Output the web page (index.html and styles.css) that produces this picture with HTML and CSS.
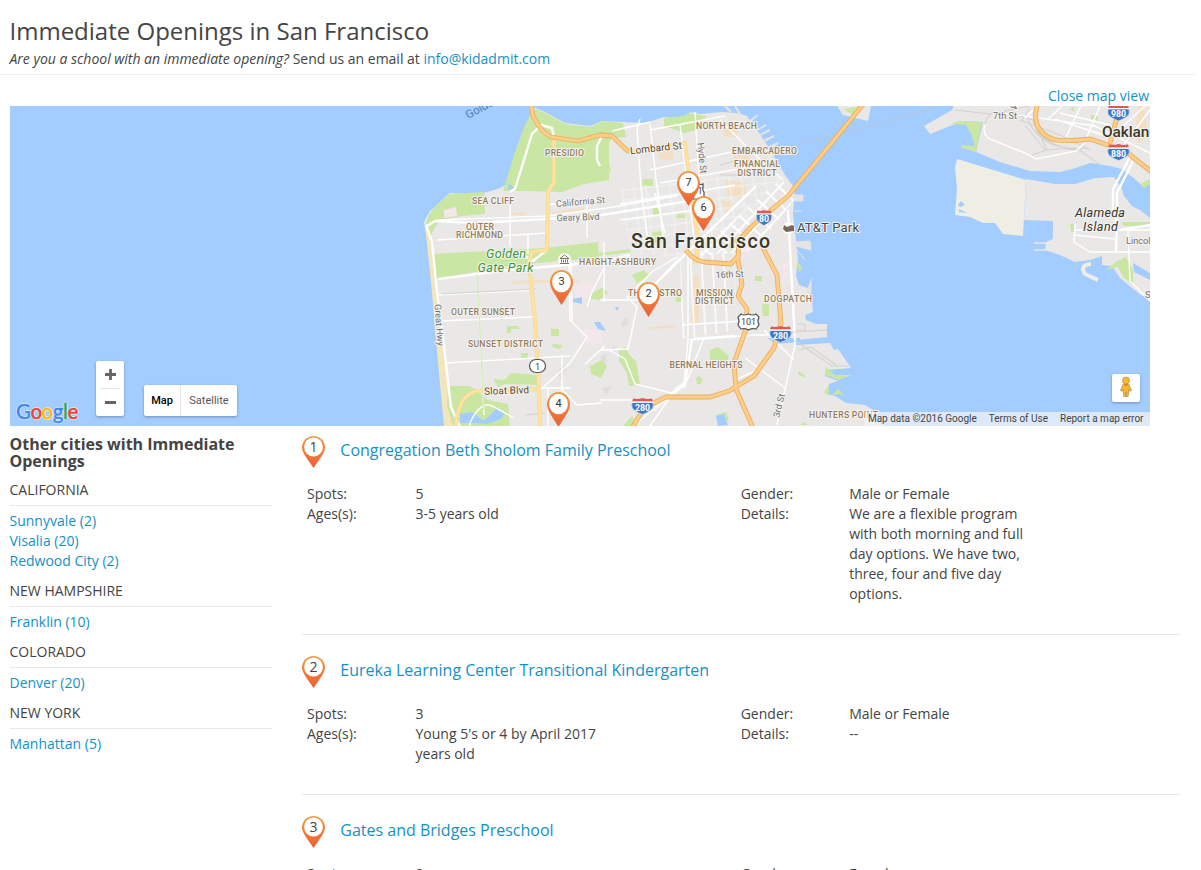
FILE: index.html
```html
<!DOCTYPE html>
<html lang="en">
<head>
<meta charset="utf-8">
<title>Immediate Openings in San Francisco</title>
<link rel="stylesheet" href="styles.css">
</head>
<body>
<svg class="defs" aria-hidden="true">
  <defs>
    <linearGradient id="pinFill" x1="0" y1="0" x2="0" y2="1"><stop offset="0" stop-color="#f29a45"/><stop offset="1" stop-color="#ed5f35"/></linearGradient>
    <symbol id="pin" viewBox="0 0 23 32" preserveAspectRatio="none"><path d="M11.5 0C5.2 0 0 5 0 11.3c0 3.100 1.300 5.600 3 8.400L11.500 32 20 19.700c1.700-2.800 3-5.300 3-8.400C23 5 17.800 0 11.500 0z" fill="url(#pinFill)"/><circle cx="11.500" cy="11" r="9.400" fill="#fff"/></symbol>
    <symbol id="shield" viewBox="0 0 24 17" preserveAspectRatio="none"><path d="M1.500 4.500h21q1.500 5-2.500 8-4 2.500-8 4-4-1.500-8-4-4-3-2.500-8z" fill="#3b78c8" stroke="#e8f1fb" stroke-width=".6"/><path d="M2.500 .600q5 1.200 9.500-.500q4.500 1.700 9.500 .500l.800 3H1.700z" fill="#d85b5b"/><path d="M1 4.100h22" stroke="#fff" stroke-width="1"/></symbol>
  </defs>
</svg>
<header class="header">
  <h1 class="title">Immediate Openings in San Francisco</h1>
  <p class="subtitle"><em>Are you a school with an immediate opening?</em> Send us an email at <a href="#">info@kidadmit.com</a></p>
</header>
<div class="map-toggle"><a href="#">Close map view</a></div>
<section class="map">
<svg class="map-canvas" width="1140" height="320" viewBox="10 106 1140 320">
  <defs>
    <pattern id="soma" width="10" height="12" patternUnits="userSpaceOnUse" patternTransform="rotate(43 700 250)"><path d="M0 6H10M5 0V12" stroke="#fff" stroke-width="1.800" fill="none"/></pattern>
    <pattern id="north" width="12" height="10" patternUnits="userSpaceOnUse" patternTransform="rotate(-7)"><path d="M0 5H12M6 0V10" stroke="#f5f5f4" stroke-width=".9" fill="none"/></pattern>
    <pattern id="mission" width="11" height="34" patternUnits="userSpaceOnUse" patternTransform="rotate(-3)"><path d="M5 0V34" stroke="#fff" stroke-width="1.500" fill="none"/></pattern>
  </defs>
  <rect x="10" y="106" width="1140" height="320" fill="#a3ccff"/>
  <!-- San Francisco peninsula -->
  <path fill="#e9e8e7" d="M531 106L545 112 565 123 590 126 603 121 622 122 645 123 664 117 685 119 690 112 700 114 722 112 737 113 747 116 757 130 767 145 776 160 785 175 795 189 793 215 795 230 798 260 796 275 799 285 808 288 812 300 813 312 805 315 806 320 816 324 827 324 827 337 797 340 796 345 830 343 834 350 838 349 851 368 826 370 825 376 838 381 829 384 826 394 835 396 846 403 865 405 876 412 870 418 885 426 445 426 440 370 435 330 432 285 430 262 427 240 424 222 430 211 440 202 450 193 480 194 498 189 508 184 514 172 520 155 526 135 530 122z"/>
  <g fill="#e5e4e2" stroke="#e5e4e2"><path d="M794 195h9v6h-10zM795 242l15-1 1 9-15-4zM797 250l8 10M794 211h8M795 186l5-2M811 279v14h-5"/><path d="M731 112l-6-6M740 114l-5-8M757 130l9-5M760 135l10-5M764 141l10-5M768 148l10-5M772 155l10-4M750 121l8-6" stroke-width="2"/></g>
  <path fill="#f4e6bb" d="M530 122l4 6-9 34-11 21-7 2 7-17zM425 225l7 17 5 45 7 65 8 74h-8l-7-74-5-60z"/>
  <g fill="#c9e6a2">
    <path d="M533 108l12 5 20 11 25 3 12-5 8 1-1 17 0 40-25 4-22 8-36-1-23 0 11-36 9-25z"/>
    <path d="M600 140l9-2v40l-9 3z"/>
    <path d="M426 222q5-15 24-28l34-2 1 22-24 2-20 4-6 7-5 10z"/>
    <path d="M600 121l23 2 3 14-15 1-5 13 5 20-11 3zM664 118l20-2 5-3 17 3-4 12-17 5-21-7z"/>
    <path d="M433 254l37-2 75-4 53-6 1 16-40 3-50 5-74 13z"/>
    <path d="M599 253l32-4v3l-32 4zM643 179h10v7h-11zM677 213h9v5h-9zM651 233l10-2 5 9-14 4zM653 208h7v7h-7zM730 238l12 2-4 14-9-6z"/>
    <path d="M493 379l11 1 8-7 26 2v10l-33-1-7 3zM507 326h12v3h-8v4h-4zM521 353h7v6h-7zM551 329h8v7h-8zM553 344l9 1-2 4-8-2zM448 386l22 0 18 14 20 4 2 22h-57l-6-20z"/>
    <path d="M591 294l12-7 5 6-8 7-9-1zM590 366l12-6 5 6-6 12-10-4zM619 350l6-3 5 9 6 5 4 24-11 1-2-13-8-12zM632 275l12-5 6 6-13 7zM677 293h5v9h-6zM710 350l8-3 11 9-2 5h-17zM696 378l3-2 4 4-2 4h-4zM762 304h7v12h-6zM716 415l10-3 3 7-7 7zM755 276h7v5h-7zM798 371l7 4v3l-7-4zM797 260l5 8-3 5zM826 367l9 8 17 0-13 5-14-5zM824 392l5-6v9zM832 395l6-6 8 8-6-3zM803 422l6 3h-8zM623 426l9-10 3 5-4 5z"/>
  </g>
  <path fill="#f4e6ea" d="M444 210l12-3 1 9-13 2zM576 285l17-4 1 8-11 12-8-5zM584 328l17 3 1 12-14 1-8-7zM740 243l11 2-2 10-8-3zM783 262l5 0v16h-6zM600 241l6 2-5 6z"/>
  <path fill="#f3dfc5" d="M512 213l13-1v3h-14zM552 212l32-4v3l-32 5zM657 153l16-3v10l-14-1zM725 180l22 3-3 16-17-3zM733 155l14-3 5 12-14 3zM723 129l14 0v8h-13zM511 281l67-2v3l-67 2zM650 327l26-2v3l-26 1zM693 275h6v50l-8-3zM720 200l15 3-8 10z"/>
  <path fill="#a3ccff" d="M460 414l12-2 12 9 12-12 9 4-4 6-14 5-12-1-15 0zM508 183l6 5-5 2zM573 299l9-2v7l-9-2zM594 322l6 0 6 9-8-2zM716 416l8-2 4 11-10 1zM615 307l4 0-2 4zM768 338l32 0v4l-25 2z"/>
  <path fill="#dadad8" d="M621 323l5-7 3 7-6 5zM611 349l4-5-1 7zM600 356l7-3-2 12zM602 388l10-2-6 9zM583 340l4-5-2 9zM557 373l7-9 3 3-6 12z" opacity=".7"/>
  <!-- Dense street grids -->
  <path fill="url(#north)" d="M620 188L690 178 786 176 702 262 630 252z"/>
  <path fill="url(#soma)" d="M700 249L782 178 794 200 754 250 702 256z"/>
  <path fill="url(#mission)" d="M680 252h54l3 78-55 9z"/>
  <g class="minor">
    <path d="M437 220l110-4 60-8 70-12M437 240l110-7M510 196v50M546 205l54-6M587 198v40M528 254v-20"/>
    <path d="M640 119l-3 9 4 60 8 62M650 124l6 55 8 65M680 125l14 112M695 112l5 85M612 131l38-9M650 130l75-14M650 170l90-20M660 183l90-16M620 204l115-19M620 220l90-12M720 120l30 30 33 30M655 193l10 40"/>
    <path d="M437 295l98-5M440 321l93-4M445 363l90-5 35-2M477 275l7 140M470 426v-3q10-22 22-17l22 12M600 300h40M571 262l1 60 15 15-17 26-30 27M604 242v60M604 268l-12 24-5 15"/>
    <path d="M548 388v38M562 355v35l15 15 25-2M541 388h30M600 350l28-1 9-42-10-10 25-25 25-15M605 346l-20 18M607 349l18 10 10 25 40 10M600 400l35 0M570 322l-1-60"/>
    <path d="M688 252v90l-4 40-50 44M682 325l60-4M690 340l65-5h27M704 338l-20 50M678 386l-28 40M745 358l40 30M790 260l5 85-18 80M735 380l22-10M764 330l30 30"/>
  </g>
  <g class="major"><path d="M427 226l8-5 40 2 72-4 55-4 50-8 48-8M426 225l6 17 5 50 7 55 7 60 9 20M438 279l72-9 90-8 30-7M680 258l-33 35M548 249l-15 12-15-9-30 5M510 192l5-3 17-55 9-9 11 3 2 10M602 136l-5 10 0 14 3 6M788 210l7 130M647 292l53-52 56-54M693 339l42-3M692 339l-7 45-33 27"/></g>
  <path class="thin-green" d="M477 274l7 136"/>
  <g class="local-gray"><path d="M441 294l95-5M797 342l35 24 18 0M799 350l12-3 25 18M797 324h8v6h-9M782 334l12-2 33-2M525 415l20-2M720 165l14-4M720 175l30 0"/></g>
  <g class="yellow-case"><path d="M554 140v42l-6 10-1 58-15 2-3 10 6 60 3 50 2 54M628 152l57-9 5 45 8 48M456 426q2-30 20-35l64-2M700 236l-5 28"/></g>
  <g class="yellow"><path d="M554 140v42l-6 10-1 58-15 2-3 10 6 60 3 50 2 54M628 152l57-9 5 45 8 48M456 426q2-30 20-35l64-2M700 236l-5 28"/></g>
  <!-- Yerba Buena island and the east bay -->
  <path d="M837 106l6 9 25 6 3-15z" fill="#e9e8e7"/><path d="M843 109l10 6 10-9" fill="#c9e6a2"/>
  <path d="M780 160q10-15 30-19l65-16 60-18" fill="none" stroke="#b6c6d9"/>
  <path fill="#e9e8e7" d="M924 126L952 110 954 106H1150V184L1143 187 1136 180 1122 169 1110 166 1090 163 1076 168 1060 172 1030 171 1000 162 976 152 983 122 965 121 950 126 930 134z"/>
  <path fill="#c9e6a2" d="M982 122l-6 30-15-4 0-3 14 1-4-12-5-9-16-1 8-3zM1091 115l7 1 0 5-7-2zM1070 109l4-3v6zM1050 134l6 4-2 3z"/>
  <path fill="#f3dfc5" d="M1138 106l6 0 4 26-8 12-6-8z"/>
  <path fill="#efeee5" d="M957 159L1026 180 1023 236 1003 234 995 223 983 223 970 217 955 215 957 188 955 168z"/>
  <path fill="#e9e8e7" d="M1026 179L1055 184 1075 184 1095 178 1114 177 1121 187 1130 203 1140 207 1150 214V300L1141 295 1132 288 1120 278 1112 266 1102 265 1102 256 1090 260 1075 262 1060 255 1045 250 1046 242 1053 239 1053 221 1024 220z"/>
  <path d="M1117 172l16 12 11 4 6-6v36l-10-8-8-4-8-10z" fill="#a3ccff"/><path d="M1034 243h12M1034 250h12" fill="none" stroke="#e9e8e7" stroke-width="1.500"/>
  <path d="M1091 264q-12 1-6 10l13 6" fill="none" stroke="#eeede6" stroke-width="4"/>
  <path d="M958 205l3-4 4 4-5 2zM959 209l8 4-8-1z" fill="#a3ccff"/>
  <path fill="#c9e6a2" d="M1122 222h28v4h-26zM1070 224h4v8h-3zM1106 270l11-9 9-4 7 13 0 15-10-8-5-10zM1140 184l10-5v5l-6 4z"/>
  <path d="M1133 263l17 10v7l-16-8z" fill="#a3ccff"/>
  <g class="local-gray"><path d="M955 110l35 4 40-8M985 124q2-15 24-11l24 7 14 30-15 5M1020 120l40 15 30 15M1025 125l20 25 30-2M1030 108l-8 12M1035 130q20 20 45 20l20 15M1027 118q15 35 60 30"/></g>
  <g class="minor"><path d="M985 125q-4 12 10 16l30 12 11 6 40-8 15-14M1005 113l90 13 55 27M1047 120l15-14M1066 137l15-31M1085 141l15-35M1105 143l40-37M1120 150l30-40M1060 113l50 12M1055 119l60 20M1075 230h75M1075 224l-1 18 16 10h60M1075 235l40 4M1128 231l2 50 20 20"/></g>
  <g class="major"><path d="M1130 157l-17 32v20l4 15-1 28M1133 161l-16 32v35M1120 230l30-5M1033 110l-8 8"/></g>
  <!-- Freeways -->
  <g class="freeway-case"><path d="M531 103l2 13q7 15 18 21l27 4 22-6 12 1 17 16M866 101L788 196l-36 30-13 14-1 20 4 24-4 12 9 13-1 20-12 34 2 26 18 41M686 250q7 10 18 12l27 2 7-8M763 248l14 27 4 48-7 25-20 28-25 15-19 6-44 0-22 11-13 22M1038 103q-8 23 10 34 8 6 42 2l15 5 20 7 28 22M1110 143l6-22 10-18"/></g>
  <g class="freeway"><path d="M531 103l2 13q7 15 18 21l27 4 22-6 12 1 17 16M866 101L788 196l-36 30-13 14-1 20 4 24-4 12 9 13-1 20-12 34 2 26 18 41M686 250q7 10 18 12l27 2 7-8M763 248l14 27 4 48-7 25-20 28-25 15-19 6-44 0-22 11-13 22M1038 103q-8 23 10 34 8 6 42 2l15 5 20 7 28 22M1110 143l6-22 10-18"/></g>
  <!-- Labels -->
  <g class="area">
    <text x="564.500" y="155.500" textLength="39">PRESIDIO</text><text x="493" y="203.500" textLength="42">SEA CLIFF</text>
    <text x="480" y="229.500" textLength="28">OUTER</text><text x="479.500" y="238" textLength="47">RICHMOND</text>
    <text x="726.500" y="129" textLength="61">NORTH BEACH</text><text x="764.500" y="154" textLength="65">EMBARCADERO</text>
    <text x="757" y="167" textLength="46">FINANCIAL</text><text x="757" y="176" textLength="39">DISTRICT</text>
    <text x="617.500" y="265" textLength="77">HAIGHT-ASHBURY</text><text x="655" y="295.500" textLength="54">THE CASTRO</text>
    <text x="714.500" y="295.500" textLength="37">MISSION</text><text x="714.500" y="304" textLength="39">DISTRICT</text>
    <text x="788" y="302" textLength="48">DOGPATCH</text><text x="483" y="315" textLength="64">OUTER SUNSET</text>
    <text x="505.500" y="347" textLength="75">SUNSET DISTRICT</text><text x="706" y="368" textLength="73">BERNAL HEIGHTS</text>
    <text x="843.500" y="418" textLength="69">HUNTERS POINT</text>
  </g>
  <g class="road">
    <text x="580.500" y="205" textLength="49" transform="rotate(-5 580 202)">California St</text><text x="578" y="220.500" textLength="43" transform="rotate(-2 578 217)">Geary Blvd</text>
    <text x="656" y="151.500" textLength="52" class="road-strong" transform="rotate(-6 656 148)">Lombard St</text>
    <text x="702" y="161" textLength="31" transform="rotate(84 702 158)">Hyde St</text><text x="729.500" y="277.500" textLength="28" transform="rotate(-3 729 274)">16th St</text>
    <text x="439" y="328" textLength="42" transform="rotate(86 439 325)">Great Hwy</text><text x="506.500" y="394" textLength="45" class="road-strong" transform="rotate(-2 506 390)">Sloat Blvd</text>
    <text x="779.500" y="409" textLength="24" transform="rotate(-76 779 406)">3rd St</text><text x="1005" y="119" textLength="24">7th St</text>
    <text x="1126" y="243.500" class="start">Lincoln Ave</text><text x="1145" y="298" class="start">Sh</text><text x="1016" y="108" transform="rotate(-60 1016 106)">W</text>
  </g>
  <text x="468" y="119" class="water" transform="rotate(-28 468 119)">Golden Gate</text>
  <g class="park"><text x="506" y="258" textLength="40">Golden</text><text x="505.500" y="271.500" textLength="56">Gate Park</text></g>
  <g class="island"><text x="1100" y="217" textLength="50">Alameda</text><text x="1100.500" y="230.500" textLength="35">Island</text></g>
  <text x="1102" y="137" class="city-small" textLength="56">Oakland</text>
  <text x="631" y="247.500" class="city" textLength="139">San Francisco</text>
  <circle cx="788.500" cy="228" r="6" fill="#fff"/><path d="M784 225l3 2 5-2 2 1v5l-8 1-3-3z" fill="#7c6657"/><text x="797" y="231.500" class="poi" textLength="62">AT&amp;T Park</text>
  <g><circle cx="564.500" cy="259.500" r="6.500" fill="#fff"/><path d="M560 258.500l4.500-3.500 4.500 3.500zM561.500 259.500v3M563.500 259.500v3M565.500 259.500v3M567.500 259.500v3M560 263.500h9" stroke="#73644f" stroke-width=".9" fill="none"/></g>
  <!-- Route markers -->
  <g class="interstate">
    <use href="#shield" x="755.500" y="210" width="17" height="16"/><text x="764" y="222.300">80</text>
    <use href="#shield" x="768.500" y="326" width="24" height="17"/><text x="780.500" y="338.500">280</text>
    <use href="#shield" x="630.500" y="398" width="24" height="17"/><text x="642.500" y="410.500">280</text>
    <use href="#shield" x="1106.500" y="104.500" width="24" height="17"/><text x="1118.500" y="117">980</text>
    <use href="#shield" x="1106.500" y="144" width="24" height="17"/><text x="1118.500" y="156.500">880</text>
  </g>
  <g class="route"><rect x="529.500" y="359.500" width="16" height="13" rx="6.500"/><text x="537.500" y="369.500">1</text><path d="M741 314q3 2 7.500 0q5 2 7.500 0l3 3q-2 4 0 8l-3 4q-4-1-7.500 1-4-2-7.500-1l-3-4q2-4 0-8z"/><text x="748.500" y="325">101</text><path d="M697 184q4 1 6 0v3q-1 3 1 5l0 4-3 3h-8v-15z"/><text x="700" y="194">1</text></g>
  <!-- School pins -->
  <g class="pin-number">
    <use href="#pin" x="677" y="171" width="23" height="35"/><text x="688.500" y="186">7</text>
    <use href="#pin" x="692" y="196" width="23" height="35"/><text x="703.500" y="211">6</text>
    <use href="#pin" x="550" y="270" width="23" height="35"/><text x="561.500" y="285">3</text>
    <use href="#pin" x="637" y="282" width="23" height="35"/><text x="648.500" y="297">2</text>
    <use href="#pin" x="547" y="392" width="23" height="35"/><text x="558.500" y="407">4</text>
  </g>
</svg>
<div class="google"><span class="g-blue">G</span><span class="g-red">o</span><span class="g-yellow">o</span><span class="g-blue">g</span><span class="g-green">l</span><span class="g-red">e</span></div>
<div class="zoom-control"><svg width="28" height="55" viewBox="0 0 28 55"><path d="M9 13.500h11M14.500 8v11M9 41.500h11" stroke="#666" stroke-width="2.800" fill="none"/><path d="M4 27.500h20" stroke="#e6e6e6"/></svg></div>
<div class="type-control"><span class="type-active">Map</span><span class="type-option">Satellite</span></div>
<div class="street-view"><svg width="12" height="22" viewBox="0 0 12 22"><g fill="#fbb829" stroke="#a88d55" stroke-width=".7"><path d="M3 8.500h6l2.500 6-1.800.8-1-2.300-.5 7.500H6.300V16h-.6v4.500H3.800L3.300 13l-1 2.300-1.800-.8z"/><circle cx="6" cy="4.500" r="3.500"/></g><path d="M4 8.500h4L6 10.500z" fill="#e7711b"/></svg></div>
<div class="map-legal"><span>Map data ©2016 Google</span><span>Terms of Use</span><span>Report a map error</span></div>
</section>
<div class="columns">
  <aside class="sidebar">
    <h2 class="side-title">Other cities with Immediate Openings</h2>
    <h3 class="state">CALIFORNIA</h3><ul class="cities"><li><a href="#">Sunnyvale (2)</a></li><li><a href="#">Visalia (20)</a></li><li><a href="#">Redwood City (2)</a></li></ul>
    <h3 class="state">NEW HAMPSHIRE</h3><ul class="cities"><li><a href="#">Franklin (10)</a></li></ul>
    <h3 class="state">COLORADO</h3><ul class="cities"><li><a href="#">Denver (20)</a></li></ul>
    <h3 class="state">NEW YORK</h3><ul class="cities"><li><a href="#">Manhattan (5)</a></li></ul>
  </aside>
  <main class="list">
    <article class="school">
      <div class="school-head"><svg class="list-pin" width="23" height="32" viewBox="0 0 23 32"><use href="#pin" width="23" height="32"/><text x="11.500" y="16">1</text></svg><a href="#">Congregation Beth Sholom Family Preschool</a></div>
      <div class="facts"><div class="pairs"><span>Spots:</span><span>5</span><span>Ages(s):</span><span>3-5 years old</span></div><div class="pairs"><span>Gender:</span><span>Male or Female</span><span>Details:</span><span>We are a flexible program with both morning and full day options. We have two, three, four and five day options.</span></div></div>
    </article>
    <article class="school">
      <div class="school-head"><svg class="list-pin" width="23" height="32" viewBox="0 0 23 32"><use href="#pin" width="23" height="32"/><text x="11.500" y="16">2</text></svg><a href="#">Eureka Learning Center Transitional Kindergarten</a></div>
      <div class="facts"><div class="pairs"><span>Spots:</span><span>3</span><span>Ages(s):</span><span>Young 5's or 4 by April 2017 years old</span></div><div class="pairs"><span>Gender:</span><span>Male or Female</span><span>Details:</span><span>--</span></div></div>
    </article>
    <article class="school">
      <div class="school-head"><svg class="list-pin" width="23" height="32" viewBox="0 0 23 32"><use href="#pin" width="23" height="32"/><text x="11.500" y="16">3</text></svg><a href="#">Gates and Bridges Preschool</a></div>
      <div class="facts"><div class="pairs"><span>Spots:</span><span>2</span></div><div class="pairs"><span>Gender:</span><span>Female</span></div></div>
    </article>
  </main>
</div>
</body>
</html>
```
FILE: styles.css
```css
* { box-sizing: border-box; }
html { height: 870px; overflow: hidden; }
body { margin: 0; height: 870px; overflow: hidden; background: #fff; color: #444; font: 14px/20px "Open Sans", sans-serif; }
a { color: #1591c5; text-decoration: none; }
h1, h2, h3, p, ul { margin: 0; padding: 0; }
.defs { position: absolute; width: 0; height: 0; }
.header { width: 1195px; height: 75px; padding: 15px 0 0 9.5px; border-bottom: 1px solid #eee; }
.title { font-size: 24px; line-height: 32px; font-weight: 400; }
.subtitle { padding-top: 1px; line-height: 22px; letter-spacing: -.01px; }
.map-toggle { width: 1149px; height: 31px; padding-top: 11px; text-align: right; }
.map { position: relative; width: 1140px; height: 320px; margin-left: 10px; overflow: hidden; font-family: Roboto, sans-serif; }
.map-canvas { display: block; }
.minor path { fill: none; stroke: #fff; stroke-width: 1.4; }
.major path { fill: none; stroke: #fff; stroke-width: 2.4; stroke-linejoin: round; }
.thin-green { fill: none; stroke: #d5edb9; stroke-width: 1.6; }
.local-gray path { fill: none; stroke: #d3d2d1; stroke-width: 1.1; }
.yellow-case path { fill: none; stroke: #f0d9a0; stroke-width: 4; stroke-linejoin: round; }
.yellow path { fill: none; stroke: #ffe39a; stroke-width: 2.8; stroke-linejoin: round; }
.freeway-case path { fill: none; stroke: #e8ad62; stroke-width: 4.8; stroke-linejoin: round; }
.freeway path { fill: none; stroke: #ffcd86; stroke-width: 3.1; stroke-linejoin: round; }
.map-canvas text { paint-order: stroke; stroke: #f4f3f1; stroke-width: 2px; stroke-linejoin: round; }
.area { font-size: 8.7px; font-weight: 500; fill: #937c5c; text-anchor: middle; }
.road { font-size: 9.2px; fill: #6f6f6f; text-anchor: middle; }
.road .start { text-anchor: start; }
.road .road-strong { fill: #5e4526; font-size: 10px; }
.map-canvas .water { font-size: 11.5px; fill: #4f80bd; stroke: none; }
.park { font-size: 12.6px; font-style: italic; font-weight: 400; fill: #3f9636; text-anchor: middle; }
.island { font-size: 12.6px; font-style: italic; font-weight: 400; fill: #35352f; text-anchor: middle; }
.city { font-size: 19.5px; font-weight: 500; fill: #3b3728; }
.city-small { font-size: 15.5px; font-weight: 500; fill: #3b3728; }
.poi { font-size: 13px; fill: #484848; }
.map-canvas .interstate text { font-size: 8.8px; font-weight: 700; fill: #fff; stroke: none; text-anchor: middle; }
.route rect, .route path { fill: #fff; stroke: #555; stroke-width: 1.2; }
.map-canvas .route text { font-size: 9px; fill: #444; stroke: none; text-anchor: middle; }
.map-canvas .pin-number text { font-size: 11px; fill: #333; stroke: none; text-anchor: middle; }
.google { position: absolute; left: 6px; top: 292px; font: 500 20.5px/26px Lato, sans-serif; letter-spacing: -.45px; text-shadow: 1px 0 #dcebff, -1px 0 #dcebff, 0 1px #dcebff, 0 -1px #dcebff; -webkit-text-stroke: .4px; }
.g-blue { color: #4285f4; } .g-red { color: #ea4335; } .g-yellow { color: #fbbc05; } .g-green { color: #34a853; }
.zoom-control { position: absolute; left: 86px; top: 255px; width: 28px; height: 55px; background: #fff; border-radius: 2px; box-shadow: 0 1px 3px rgba(0,0,0,.3); }
.zoom-control svg { display: block; }
.type-control { position: absolute; left: 134px; top: 279px; display: flex; height: 31px; background: #fff; border-radius: 2px; box-shadow: 0 1px 3px rgba(0,0,0,.3); font-size: 11px; line-height: 31px; }
.type-active { width: 37px; text-align: center; font-weight: 500; color: #000; border-right: 1px solid #e6e6e6; }
.type-option { width: 56px; text-align: center; color: #565656; }
.street-view { position: absolute; left: 1102px; top: 268px; width: 28px; height: 28px; padding: 2px 8px; background: #fff; border-radius: 2px; box-shadow: 0 1px 3px rgba(0,0,0,.3); }
.map-legal { position: absolute; right: 0; bottom: 0; display: flex; gap: 12px; height: 14px; padding: 0 6.5px 0 3px; background: rgba(245,245,245,.7); color: #444; font-size: 10px; line-height: 14px; white-space: nowrap; }
.columns { display: flex; gap: 30px; padding-left: 10px; }
.sidebar { width: 262px; padding-top: 10px; }
.side-title { font-size: 16px; line-height: 17px; font-weight: 700; margin: 0 0 10px -.5px; }
.state { font-size: 14px; line-height: 20px; font-weight: 400; padding-bottom: 5px; border-bottom: 1px solid #e8e8e8; text-indent: -.5px; }
.cities { list-style: none; padding: 5px 0 10px; margin-left: -.5px; }
.list { width: 878px; }
.school { padding: 21px 0 30px; border-bottom: 1px solid #e8e8e8; }
.school:first-child { padding-top: 10px; }
.school-head { display: flex; gap: 15.300px; height: 48px; font-size: 16px; line-height: 28px; }
.list-pin text { font: 14px "Open Sans", sans-serif; fill: #444; text-anchor: middle; }
.facts { display: grid; grid-template-columns: 433.700px 434px; padding-left: 5px; }
.pairs { display: grid; grid-template-columns: 108.5px 187px; align-content: start; }
```
